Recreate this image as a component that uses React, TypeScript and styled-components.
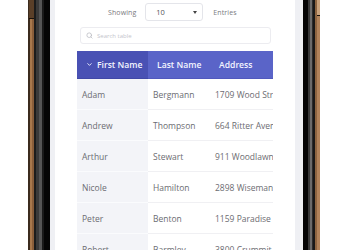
import React from 'react'
import styled, { createGlobalStyle } from 'styled-components'
import { ChevronDown, Search } from 'lucide-react'

const GlobalStyle = createGlobalStyle`
  html, body {
    margin: 0;
    padding: 0;
    background: #ffffff;
  }
  body {
    font-family: "Open Sans", "Liberation Sans", sans-serif;
  }
`

interface Person {
  first: string
  last: string
  address: string
}

const people: Person[] = [
  { first: 'Adam', last: 'Bergmann', address: '1709 Wood Street' },
  { first: 'Andrew', last: 'Thompson', address: '664 Ritter Avenue' },
  { first: 'Arthur', last: 'Stewart', address: '911 Woodlawn Drive' },
  { first: 'Nicole', last: 'Hamilton', address: '2898 Wiseman Street' },
  { first: 'Peter', last: 'Benton', address: '1159 Paradise Lane' },
  { first: 'Robert', last: 'Barmley', address: '3800 Crummit Lane' },
]

const Stage = styled.div`
  width: 350px;
  height: 250px;
  overflow: hidden;
  display: flex;
  padding-left: 28px;
  box-sizing: border-box;
  background: #fff;
`

const Bezel = styled.div<{ $side: 'left' | 'right' }>`
  position: relative;
  flex: none;
  height: 250px;
  width: ${({ $side }) => ($side === 'left' ? '22px' : '17px')};
  background: ${({ $side }) =>
    $side === 'left'
      ? `linear-gradient(90deg,
          #3b2b1e 0 2px, #a8784c 2px 4px, #8a5e3a 4px 6px,
          #1c1c1c 6px 8px, #3a3a3a 8px 11px, #555 11px 14px,
          #1a1a1a 14px 16px, #050505 16px 22px)`
      : `linear-gradient(90deg,
          #050505 0 5px, #3a3a3a 5px 7px, #6a6a6a 7px 9px, #2c2c2c 9px 10px,
          #181818 10px 12px, #8c6440 12px 14px, #b0825a 14px 17px)`};
`

const SideButton = styled.span<{ $side: 'left' | 'right' }>`
  position: absolute;
  top: 0;
  ${({ $side }) => ($side === 'left' ? 'left: 1px;' : 'right: 0;')}
  width: ${({ $side }) => ($side === 'left' ? '5px' : '3px')};
  height: ${({ $side }) => ($side === 'left' ? '18px' : '15px')};
  background: ${({ $side }) => ($side === 'left' ? '#5a3f28' : '#c9a27c')};
  border-bottom: 1px solid #1a120b;
`

const Screen = styled.div`
  flex: none;
  width: 253px;
  height: 250px;
  background: #eff0f4;
  padding: 0 8px 0 5px;
  box-sizing: border-box;
`

const Card = styled.div`
  background: #ffffff;
  height: 100%;
  padding: 3px 22px 0 22px;
  box-sizing: border-box;
`

const Controls = styled.div`
  display: flex;
  align-items: center;
  height: 18px;
  padding-left: 31px;
  gap: 9px;
`

const Label = styled.span`
  font-size: 7px;
  color: #7a7a80;
  letter-spacing: 0.1px;
`

const SelectBox = styled.div`
  width: 58px;
  height: 18px;
  border: 1px solid #e4e5ea;
  border-radius: 3px;
  box-sizing: border-box;
  display: flex;
  align-items: center;
  justify-content: space-between;
  padding: 0 5px 0 10px;
  font-size: 7.5px;
  color: #555;
  margin-right: 1px;
`

const Caret = styled.span`
  width: 0;
  height: 0;
  border-left: 2.5px solid transparent;
  border-right: 2.5px solid transparent;
  border-top: 3px solid #444;
`

const SearchBox = styled.div`
  margin: 6px 2px 0 3px;
  height: 17px;
  border: 1px solid #ececf0;
  border-radius: 3px;
  box-sizing: border-box;
  display: flex;
  align-items: center;
  gap: 4px;
  padding-left: 5px;
  font-size: 6px;
  color: #c4c5cc;
`

const TableWrap = styled.div`
  margin-top: 7px;
  width: 196px;
  overflow: hidden;
`

const Table = styled.table`
  border-collapse: collapse;
  table-layout: fixed;
  width: 260px;
`

const HeadCell = styled.th<{ $first?: boolean }>`
  height: 27px;
  padding: 0 0 0 9px;
  text-align: left;
  vertical-align: middle;
  font-weight: 600;
  font-size: 8.6px;
  color: #f4f5ff;
  white-space: nowrap;
  background: ${({ $first }) => ($first ? '#4951b4' : '#5a64c8')};
  border-bottom: 1px solid ${({ $first }) => ($first ? '#4048a6' : '#5159bd')};
`

const HeadInner = styled.div`
  display: flex;
  align-items: center;
  gap: 4px;
`

const Cell = styled.td<{ $first?: boolean }>`
  height: 30px;
  padding: 0 0 0 5px;
  font-size: 8.5px;
  color: #6c6c72;
  white-space: nowrap;
  overflow: hidden;
  background: ${({ $first }) => ($first ? '#f3f4f8' : '#ffffff')};
  border-bottom: 1px solid ${({ $first }) => ($first ? '#fafbfd' : '#f0f0f3')};
`

const App = () => {
  return (
    <>
      <GlobalStyle />
      <Stage>
        <Bezel $side="left">
          <SideButton $side="left" />
        </Bezel>
        <Screen>
          <Card>
            <Controls>
              <Label>Showing</Label>
              <SelectBox>
                10
                <Caret />
              </SelectBox>
              <Label>Entries</Label>
            </Controls>
            <SearchBox>
              <Search size={7} color="#b8b9c0" strokeWidth={2.5} />
              Search table
            </SearchBox>
            <TableWrap>
              <Table>
                <colgroup>
                  <col style={{ width: 71 }} />
                  <col style={{ width: 62 }} />
                  <col style={{ width: 127 }} />
                </colgroup>
                <thead>
                  <tr>
                    <HeadCell $first>
                      <HeadInner>
                        <ChevronDown size={7} strokeWidth={3} />
                        First Name
                      </HeadInner>
                    </HeadCell>
                    <HeadCell>Last Name</HeadCell>
                    <HeadCell>Address</HeadCell>
                  </tr>
                </thead>
                <tbody>
                  {people.map((p) => (
                    <tr key={p.first}>
                      <Cell $first>{p.first}</Cell>
                      <Cell>{p.last}</Cell>
                      <Cell>{p.address}</Cell>
                    </tr>
                  ))}
                </tbody>
              </Table>
            </TableWrap>
          </Card>
        </Screen>
        <Bezel $side="right">
          <SideButton $side="right" />
        </Bezel>
      </Stage>
    </>
  )
}

export default App
